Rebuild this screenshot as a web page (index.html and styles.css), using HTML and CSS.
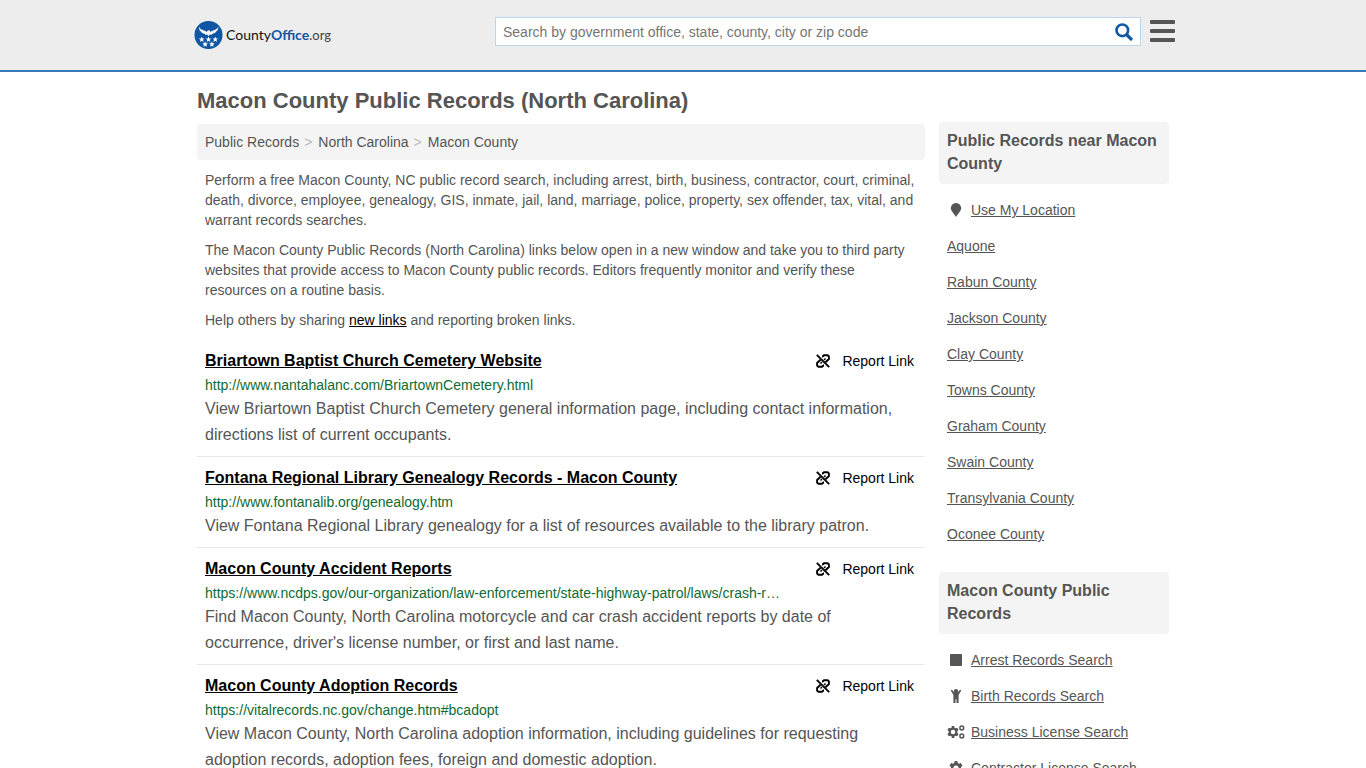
FILE: index.html
```html
<!DOCTYPE html>
<html lang="en">
<head>
  <meta charset="UTF-8">
  <meta name="viewport" content="width=device-width, initial-scale=1">
  <title>Macon County Public Records (North Carolina)</title>
  <link rel="stylesheet" href="styles.css">
</head>
<body>
<!-- shared icons -->
<svg class="sprite" aria-hidden="true">
  <symbol id="star" viewBox="0 0 10 10">
    <path d="M5 0l1.300 3.400 3.700.2-2.900 2.300 1 3.700L5 7.500 1.900 9.600l1-3.700L0 3.600l3.700-.2z"/>
  </symbol>
  <symbol id="unlink" viewBox="0 0 16 16">
    <g fill="none" stroke="currentColor" stroke-width="1.900">
      <path d="M1.800 1.800l12.400 12.400"/>
      <path d="M7 3.500h.5L9 2.200h3.600l1.300 1.300V6L10.500 9.200"/>
      <path d="M9 12.500h-.5L7 13.800H3.400l-1.300-1.300V10L5.500 6.800"/>
      <path d="M9 7l1.500-1.500M7 9l-1.500 1.500" stroke-width="1.500"/>
    </g>
  </symbol>
  <symbol id="cog" viewBox="0 0 16 16">
    <path fill-rule="evenodd" d="M6.500 0h3l.5 2.300 1.400.8 2.200-.8 1.800 3.100-1.700 1.500v2.200l1.700 1.500-1.800 3.100-2.200-.8-1.400.8-.5 2.300h-3L6 13.700l-1.400-.8-2.200.8L.6 10.600l1.700-1.500V6.900L.6 5.400l1.800-3.100 2.200.8L6 2.300zM8 5a3 3 0 1 0 0 6 3 3 0 0 0 0-6z"/>
  </symbol>
</svg>

<header class="header">
  <div class="header-inner">
    <a class="logo" href="#" aria-label="CountyOffice.org">
      <svg class="logo-mark" viewBox="0 0 30 30">
        <circle cx="15" cy="15" r="14.500" fill="#0f56a3"/>
        <g fill="#fff">
          <path d="M5 6.500c1.500 2.700 4 3.700 6.300 4.200l1.900 1.300.8-1.500 1.700-.3 1 .7.300.9 2-1.100c2.300-.5 4.700-1.500 6.300-4.200-.1 2.400-1 3.900-2.300 4.900-.8 1.400-1.900 2-3.300 2.100l-1.700 1.300-1.700-.3-1.300 1.700-1.300-1.700-1.700.3-1.700-1.300c-1.400-.1-2.500-.7-3.300-2.100C6 10.400 5.100 8.900 5 6.500z"/>
          <use href="#star" x="5" y="16.500" width="6" height="6"/>
          <use href="#star" x="12" y="16.500" width="6" height="6"/>
          <use href="#star" x="19" y="16.500" width="6" height="6"/>
          <use href="#star" x="8.500" y="21.500" width="6" height="6"/>
          <use href="#star" x="15.500" y="21.500" width="6" height="6"/>
        </g>
      </svg>
      <span class="logo-text">County<b>Office</b><small>.org</small></span>
    </a>
    <form class="search">
      <input type="text" aria-label="Search" placeholder="Search by government office, state, county, city or zip code">
      <button type="button" aria-label="Search">
        <svg viewBox="0 0 18 18" fill="none" stroke="#0f56a3"><circle cx="7.300" cy="7.300" r="5.800" stroke-width="2.600"/><path d="M11.500 11.500l5.500 5.500" stroke-width="3.200"/></svg>
      </button>
    </form>
    <button class="menu-button" type="button" aria-label="Menu"><span></span><span></span><span></span></button>
  </div>
</header>

<div class="page">
  <main class="content">
    <h1>Macon County Public Records (North Carolina)</h1>
    <nav class="breadcrumb">
      <a href="#">Public Records</a><span>&gt;</span><a href="#">North Carolina</a><span>&gt;</span><a href="#">Macon County</a>
    </nav>

    <div class="intro">
      <p>Perform a free Macon County, NC public record search, including arrest, birth, business, contractor, court, criminal, death, divorce, employee, genealogy, GIS, inmate, jail, land, marriage, police, property, sex offender, tax, vital, and warrant records searches.</p>
      <p>The Macon County Public Records (North Carolina) links below open in a new window and take you to third party websites that provide access to Macon County public records. Editors frequently monitor and verify these resources on a routine basis.</p>
      <p>Help others by sharing <a href="#">new links</a> and reporting broken links.</p>
    </div>

    <div class="record">
      <div class="record-head">
        <a class="record-title" href="#">Briartown Baptist Church Cemetery Website</a>
        <a class="report" href="#"><svg><use href="#unlink"/></svg>Report Link</a>
      </div>
      <div class="record-url">http://www.nantahalanc.com/BriartownCemetery.html</div>
      <p>View Briartown Baptist Church Cemetery general information page, including contact information, directions list of current occupants.</p>
    </div>

    <div class="record">
      <div class="record-head">
        <a class="record-title" href="#">Fontana Regional Library Genealogy Records - Macon County</a>
        <a class="report" href="#"><svg><use href="#unlink"/></svg>Report Link</a>
      </div>
      <div class="record-url">http://www.fontanalib.org/genealogy.htm</div>
      <p>View Fontana Regional Library genealogy for a list of resources available to the library patron.</p>
    </div>

    <div class="record">
      <div class="record-head">
        <a class="record-title" href="#">Macon County Accident Reports</a>
        <a class="report" href="#"><svg><use href="#unlink"/></svg>Report Link</a>
      </div>
      <div class="record-url">https://www.ncdps.gov/our-organization/law-enforcement/state-highway-patrol/laws/crash-r…</div>
      <p>Find Macon County, North Carolina motorcycle and car crash accident reports by date of occurrence, driver's license number, or first and last name.</p>
    </div>

    <div class="record">
      <div class="record-head">
        <a class="record-title" href="#">Macon County Adoption Records</a>
        <a class="report" href="#"><svg><use href="#unlink"/></svg>Report Link</a>
      </div>
      <div class="record-url">https://vitalrecords.nc.gov/change.htm#bcadopt</div>
      <p>View Macon County, North Carolina adoption information, including guidelines for requesting adoption records, adoption fees, foreign and domestic adoption.</p>
    </div>
  </main>

  <aside class="sidebar">
    <h2>Public Records near Macon County</h2>
    <ul>
      <li><svg viewBox="0 0 18 14"><path d="M9 0a5 5 0 0 1 5.200 5c0 3-3.200 5.500-5.200 9-2-3.500-5.200-6-5.200-9A5 5 0 0 1 9 0z"/></svg><a href="#">Use My Location</a></li>
      <li><a href="#">Aquone</a></li>
      <li><a href="#">Rabun County</a></li>
      <li><a href="#">Jackson County</a></li>
      <li><a href="#">Clay County</a></li>
      <li><a href="#">Towns County</a></li>
      <li><a href="#">Graham County</a></li>
      <li><a href="#">Swain County</a></li>
      <li><a href="#">Transylvania County</a></li>
      <li><a href="#">Oconee County</a></li>
    </ul>

    <h2>Macon County Public Records</h2>
    <ul>
      <li><svg viewBox="0 0 18 14"><rect x="3" y="1" width="12" height="12" rx="1"/></svg><a href="#">Arrest Records Search</a></li>
      <li><svg viewBox="0 0 18 14"><circle cx="9" cy="2.200" r="2.200"/><path d="M4.900.5l2.600 3.600h3L13.100.5l1.100.9-2.600 4.500V14H9.500v-3.800h-1V14H6.400V5.900L3.800 1.400z"/></svg><a href="#">Birth Records Search</a></li>
      <li><svg viewBox="0 0 18 14"><use href="#cog" x="0" y="1" width="12" height="12"/><g fill="none" stroke="#555" stroke-width="1.500"><circle cx="14.800" cy="3" r="1.900"/><circle cx="14.800" cy="11" r="1.900"/></g></svg><a href="#">Business License Search</a></li>
      <li><svg viewBox="0 0 18 14"><use href="#cog" x="2" y="0" width="14" height="14"/></svg><a href="#">Contractor License Search</a></li>
    </ul>
  </aside>
</div>
</body>
</html>
```

FILE: styles.css
```css
* {
  box-sizing: border-box;
}

body {
  margin: 0;
  font-family: "Liberation Sans", Arial, sans-serif;
  font-size: 14px;
  line-height: 20px;
  color: #555;
  background: #fff;
}

.sprite {
  display: none;
}

/* Header */
.header {
  height: 72px;
  background: #ededed;
  border-bottom: 2px solid #337ab7;
}

.header-inner {
  display: flex;
  align-items: flex-start;
  max-width: 984px;
  margin: 0 auto;
  padding: 17px 0 0 3px;
}

.logo {
  display: flex;
  align-items: center;
  gap: 3px;
  padding-top: 3px;
  color: #111;
  text-decoration: none;
}

.logo-mark {
  width: 29px;
  height: 30px;
}

.logo-text {
  font-family: Lato, sans-serif;
  font-size: 14px;
}

.logo-text b {
  color: #0f56a3;
}

.logo-text small {
  font-size: 13px;
  color: #444;
}

.search {
  display: flex;
  width: 646px;
  height: 29px;
  margin-left: auto;
  background: #fff;
  border: 1px solid #bfd5e8;
}

.search input {
  flex: 1;
  min-width: 0;
  padding: 0 7px;
  border: 0;
  outline: 0;
  background: none;
  font: inherit;
  color: #555;
}

.search input::placeholder {
  color: #757575;
}

.search button {
  padding: 0 7px;
  border: 0;
  background: none;
  line-height: 0;
}

.search svg {
  width: 18px;
  height: 18px;
}

.menu-button {
  display: flex;
  flex-direction: column;
  gap: 5px;
  width: 25px;
  margin-left: 9px;
  padding: 3px 0 0;
  border: 0;
  background: none;
}

.menu-button span {
  width: 100%;
  height: 4px;
  border-radius: 1px;
  background: #555;
}

/* Page columns */
.page {
  display: flex;
  gap: 14px;
  max-width: 972px;
  margin: 0 auto;
}

.content {
  flex: 1;
  min-width: 0;
}

h1 {
  margin: 0;
  padding: 15px 0 9px;
  font-size: 22px;
  line-height: 28px;
}

.breadcrumb {
  padding: 8px;
  background: #f4f4f4;
  border-radius: 4px;
}

.breadcrumb a {
  color: #555;
  text-decoration: none;
}

.breadcrumb span {
  padding: 0 6px 0 5px;
  color: #bbb;
}

.intro {
  padding: 10px 8px;
}

.intro p {
  margin: 0 0 10px;
}

.intro p:last-child {
  margin-bottom: 0;
}

.intro a {
  color: #000;
}

/* Records */
.record {
  padding: 8px;
  border-bottom: 1px solid #e7e7e7;
}

.record-head {
  display: flex;
  justify-content: space-between;
  margin-bottom: 1px;
  line-height: 26px;
}

.record-title {
  font-size: 16px;
  font-weight: bold;
  color: #000;
}

.report {
  display: flex;
  align-items: center;
  padding-right: 3px;
  color: #000;
  text-decoration: none;
}

.report svg {
  width: 16px;
  height: 16px;
  margin-right: 11px;
}

.record-url {
  color: #0e6b32;
}

.record p {
  margin: 1px 0 0;
  font-size: 16px;
  line-height: 26px;
}

/* Sidebar */
.sidebar {
  width: 230px;
  padding-top: 50px;
}

.sidebar h2 {
  margin: 0;
  padding: 7px 8px 9px;
  font-size: 16px;
  line-height: 23px;
  background: #f4f4f4;
  border-radius: 4px;
}

.sidebar ul {
  margin: 8px 0 20px;
  padding: 0 8px;
  list-style: none;
}

.sidebar li {
  display: flex;
  align-items: center;
  height: 36px;
}

.sidebar li svg {
  width: 18px;
  height: 14px;
  margin-right: 6px;
  fill: #555;
}

.sidebar a {
  color: #555;
}
```
